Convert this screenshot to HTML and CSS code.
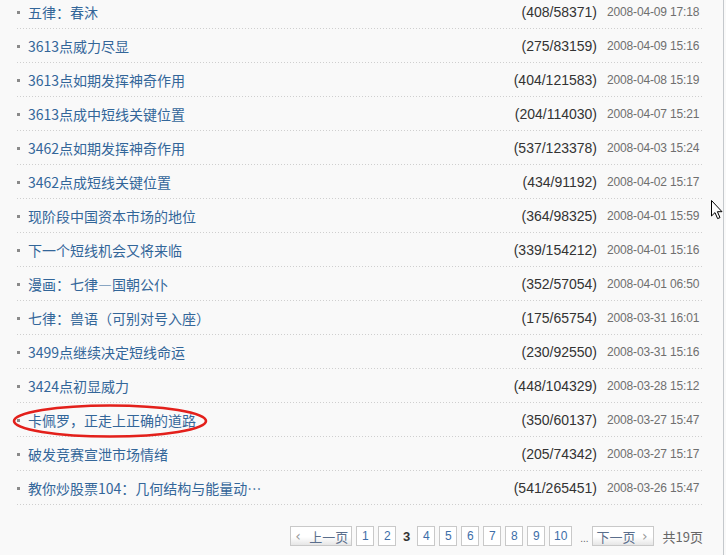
FILE: index.html
```html
<!DOCTYPE html>
<html lang="zh">
<head>
<meta charset="utf-8">
<link rel="stylesheet" href="styles.css">
</head>
<body>
<div class="page">
  <ul class="list">
    <li class="row"><span class="dot"></span><a class="title">五律：春沐</a><span class="count">(408/58371)</span><span class="date">2008-04-09 17:18</span></li>
    <li class="row"><span class="dot"></span><a class="title">3613点威力尽显</a><span class="count">(275/83159)</span><span class="date">2008-04-09 15:16</span></li>
    <li class="row"><span class="dot"></span><a class="title">3613点如期发挥神奇作用</a><span class="count">(404/121583)</span><span class="date">2008-04-08 15:19</span></li>
    <li class="row"><span class="dot"></span><a class="title">3613点成中短线关键位置</a><span class="count">(204/114030)</span><span class="date">2008-04-07 15:21</span></li>
    <li class="row"><span class="dot"></span><a class="title">3462点如期发挥神奇作用</a><span class="count">(537/123378)</span><span class="date">2008-04-03 15:24</span></li>
    <li class="row"><span class="dot"></span><a class="title">3462点成短线关键位置</a><span class="count">(434/91192)</span><span class="date">2008-04-02 15:17</span></li>
    <li class="row"><span class="dot"></span><a class="title">现阶段中国资本市场的地位</a><span class="count">(364/98325)</span><span class="date">2008-04-01 15:59</span></li>
    <li class="row"><span class="dot"></span><a class="title">下一个短线机会又将来临</a><span class="count">(339/154212)</span><span class="date">2008-04-01 15:16</span></li>
    <li class="row"><span class="dot"></span><a class="title">漫画：七律—国朝公仆</a><span class="count">(352/57054)</span><span class="date">2008-04-01 06:50</span></li>
    <li class="row"><span class="dot"></span><a class="title">七律：兽语（可别对号入座）</a><span class="count">(175/65754)</span><span class="date">2008-03-31 16:01</span></li>
    <li class="row"><span class="dot"></span><a class="title">3499点继续决定短线命运</a><span class="count">(230/92550)</span><span class="date">2008-03-31 15:16</span></li>
    <li class="row"><span class="dot"></span><a class="title">3424点初显威力</a><span class="count">(448/104329)</span><span class="date">2008-03-28 15:12</span></li>
    <li class="row"><span class="dot"></span><a class="title">卡佩罗，正走上正确的道路</a><span class="count">(350/60137)</span><span class="date">2008-03-27 15:47</span></li>
    <li class="row"><span class="dot"></span><a class="title">破发竞赛宣泄市场情绪</a><span class="count">(205/74342)</span><span class="date">2008-03-27 15:17</span></li>
    <li class="row"><span class="dot"></span><a class="title">教你炒股票104：几何结构与能量动…</a><span class="count">(541/265451)</span><span class="date">2008-03-26 15:47</span></li>
  </ul>
  <div class="pager">
    <a class="btn prev"><span class="chev">&lsaquo;</span><span>上一页</span></a>
    <a class="num">1</a>
    <a class="num">2</a>
    <span class="cur">3</span>
    <a class="num">4</a>
    <a class="num">5</a>
    <a class="num">6</a>
    <a class="num">7</a>
    <a class="num">8</a>
    <a class="num">9</a>
    <a class="num wide">10</a>
    <span class="ell">...</span>
    <a class="btn next"><span>下一页</span><span class="chev">&rsaquo;</span></a>
    <span class="total">共19页</span>
  </div>
  <svg class="mark" width="200" height="38" viewBox="0 0 200 38"><ellipse cx="98" cy="19" rx="96" ry="15.5" fill="none" stroke="#e3201b" stroke-width="2.6"/></svg>
  <svg class="cursor" width="14" height="21" viewBox="0 0 14 21"><path d="M0.5 0.5 L0.5 16 L4 12.6 L6.6 18.6 L9 17.6 L6.4 11.7 L11 11.7 Z" fill="#fff" stroke="#000" stroke-width="1"/></svg>
</div>
</body>
</html>
```
FILE: styles.css
```css
html, body {
  margin: 0;
  padding: 0;
  background: #f9f9f9;
}
.page {
  position: relative;
  width: 724px;
  height: 555px;
  border-right: 1px solid #c4c8cc;
  box-sizing: border-box;
  overflow: hidden;
}
.list {
  list-style: none;
  margin: -5px 0 0 17px;
  padding: 0;
  width: 686px;
}
.row {
  display: flex;
  align-items: center;
  height: 34px;
  box-sizing: border-box;
  padding-bottom: 1px;
  background: linear-gradient(to right, #cfcfcf 1px, transparent 1px) repeat-x left bottom / 3px 1px;
}
.dot {
  width: 3px;
  height: 3px;
  background: #8a8a8a;
  margin-right: 8px;
  margin-top: 1px;
}
.title {
  flex: 1;
  font-family: "Noto Sans CJK SC", sans-serif;
  font-size: 14px;
  color: #336699;
  white-space: nowrap;
}
.count {
  font-family: "Liberation Sans", sans-serif;
  font-size: 14px;
  color: #333;
}
.date {
  width: 93px;
  margin-left: 10px;
  margin-right: 3px;
  font-family: "Liberation Sans", sans-serif;
  font-size: 12px;
  letter-spacing: -0.15px;
  color: #6f6f6f;
  white-space: nowrap;
}
.pager {
  display: flex;
  align-items: center;
  justify-content: flex-end;
  margin: 21px 20px 0 0;
  height: 20px;
  font-family: "Liberation Sans", sans-serif;
}
.btn {
  display: flex;
  align-items: center;
  justify-content: space-between;
  box-sizing: border-box;
  width: 62px;
  height: 20px;
  border: 1px solid #c9c9c9;
  background: linear-gradient(to bottom, #ffffff 0%, #ffffff 55%, #e6e6e6 100%);
  font-family: "Noto Sans CJK SC", sans-serif;
  font-size: 13px;
  color: #5a6e8c;
  padding: 0 3px 0 4px;
  margin-right: 4px;
}
.next { padding: 0 5px 0 4px; margin-left: 3px; margin-right: 0; }
.chev {
  font-family: "DejaVu Sans", sans-serif;
  font-size: 14px;
  color: #999;
  line-height: 1;
}
.num {
  display: flex;
  align-items: center;
  justify-content: center;
  box-sizing: border-box;
  width: 18px;
  height: 20px;
  border: 1px solid #c9c9c9;
  background: #fff;
  font-size: 12px;
  color: #3d6ea8;
  margin-right: 4px;
}
.wide { width: 23px; }
.cur {
  font-size: 13px;
  font-weight: bold;
  color: #333;
  width: 13px;
  text-align: center;
  margin: 0 4px 0 0;
}
.ell {
  font-size: 10px;
  color: #666;
  margin: 4px 0 0 4px;
}
.total {
  margin-left: 9px;
  font-family: "Noto Sans CJK SC", sans-serif;
  font-size: 13px;
  color: #666;
}
.mark {
  position: absolute;
  left: 12px;
  top: 402px;
}
.cursor {
  position: absolute;
  left: 711px;
  top: 200px;
}
```
